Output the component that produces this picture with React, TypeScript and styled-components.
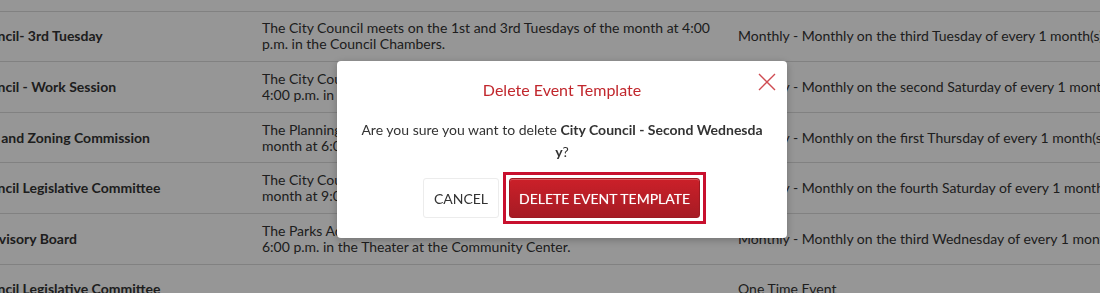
import React from 'react';
import styled, { createGlobalStyle } from 'styled-components';

type EventRow = {
  name: string;
  description: string;
  recurrence: string;
};

const rows: EventRow[] = [
  {
    name: 'City Council - Second Wednesday',
    description:
      'The City Council meets on the 2nd Wednesday of the month at 4:00 p.m. in the Council Chambers.',
    recurrence: 'Monthly - Monthly on the second Wednesday of every 1 month(s)',
  },
  {
    name: 'City Council- 3rd Tuesday',
    description:
      'The City Council meets on the 1st and 3rd Tuesdays of the month at 4:00 p.m. in the Council Chambers.',
    recurrence: 'Monthly - Monthly on the third Tuesday of every 1 month(s)',
  },
  {
    name: 'City Council - Work Session',
    description:
      'The City Council holds work sessions on the second and fourth Saturday at 4:00 p.m. in the Council Chambers.',
    recurrence: 'Monthly - Monthly on the second Saturday of every 1 month(s)',
  },
  {
    name: 'Planning and Zoning Commission',
    description:
      'The Planning and Zoning Commission meets the first Thursday of every month at 6:00 p.m. in the Council Chambers.',
    recurrence: 'Monthly - Monthly on the first Thursday of every 1 month(s)',
  },
  {
    name: 'City Council Legislative Committee',
    description:
      'The City Council Legislative Committee meets the fourth Saturday of every month at 9:00 a.m. in the Council Chambers.',
    recurrence: 'Monthly - Monthly on the fourth Saturday of every 1 month(s)',
  },
  {
    name: 'Parks Advisory Board',
    description:
      'The Parks Advisory Board meets on the third Wednesday of the month at 6:00 p.m. in the Theater at the Community Center.',
    recurrence: 'Monthly - Monthly on the third Wednesday of every 1 month(s)',
  },
  {
    name: 'City Council Legislative Committee',
    description: '',
    recurrence: 'One Time Event',
  },
];

const GlobalStyle = createGlobalStyle`
  html, body {
    margin: 0;
    padding: 0;
    background: #fff;
    overflow: hidden;
  }
  body {
    font-family: Lato, "Noto Sans", sans-serif;
    color: #333;
  }
`;

const Page = styled.div`
  width: 1100px;
  height: 293px;
  overflow: hidden;
`;

/* the list is scrolled: part of the first row and the first column are out of view */
const Table = styled.div`
  width: 1280px;
  margin: -39px 0 0 -64px;
`;

const Row = styled.div`
  display: grid;
  grid-template-columns: 318px 476px 1fr;
  align-items: center;
  min-height: 50.6px;
  box-sizing: border-box;
  border-bottom: 1px solid #dcdcdc;
`;

const Cell = styled.div<{ $bold?: boolean; $nowrap?: boolean }>`
  padding: 8px;
  font-size: 14px;
  line-height: 16px;
  font-weight: ${(p) => (p.$bold ? 700 : 400)};
  white-space: ${(p) => (p.$nowrap ? 'nowrap' : 'normal')};
  color: #333;
`;

const Backdrop = styled.div`
  position: fixed;
  inset: 0;
  background: rgba(0, 0, 0, 0.41);
  display: flex;
  align-items: center;
  justify-content: center;
`;

const Dialog = styled.div`
  position: relative;
  width: 450px;
  box-sizing: border-box;
  margin: 6px 0 0 24px;
  padding: 19px 24px 13px;
  background: #fff;
  border-radius: 4px;
  box-shadow: 0 2px 8px rgba(0, 0, 0, 0.25);
  text-align: center;
`;

const CloseButton = styled.button`
  position: absolute;
  top: 11px;
  right: 11px;
  width: 19px;
  height: 19px;
  padding: 0;
  border: 0;
  background: none;
  cursor: pointer;
  display: flex;
  align-items: center;
  justify-content: center;
`;

const Title = styled.h2`
  margin: 0;
  font-size: 16px;
  line-height: 20px;
  font-weight: 400;
  color: #c1272d;
`;

const Message = styled.p`
  margin: 19px 0 0;
  font-size: 14px;
  line-height: 22px;
  color: #333;
  word-break: break-all;

  strong {
    font-weight: 700;
  }
`;

const Actions = styled.div`
  display: flex;
  justify-content: center;
  align-items: center;
  gap: 4px;
  margin-top: 8px;
  padding: 1px 0 1px 5px;
`;

const FocusRing = styled.span`
  display: inline-flex;
  padding: 3px;
  border: 3px solid #c8102e;
`;

const Button = styled.button<{ $primary?: boolean }>`
  height: 40px;
  box-sizing: border-box;
  padding: 0 ${(p) => (p.$primary ? '9px' : '10px')};
  font-family: Lato, "Noto Sans", sans-serif;
  font-size: 14px;
  text-transform: uppercase;
  border-radius: 3px;
  cursor: pointer;
  color: ${(p) => (p.$primary ? '#fff' : '#333')};
  border: 1px solid ${(p) => (p.$primary ? '#9d1a22' : '#ececec')};
  background: ${(p) =>
    p.$primary ? 'linear-gradient(#cb2029, #a61b24)' : '#fff'};
  box-shadow: ${(p) =>
    p.$primary ? 'inset 0 1px 0 rgba(255, 255, 255, 0.25)' : 'none'};
  text-shadow: ${(p) => (p.$primary ? '0 0 1px rgba(255, 255, 255, 0.5)' : 'none')};
  outline: none;
`;

function CloseIcon() {
  return (
    <svg width="18" height="18" viewBox="0 0 18 18">
      <path d="M1 1 L17 17 M17 1 L1 17" stroke="#cf4b52" strokeWidth="1.4" fill="none" />
    </svg>
  );
}

export default function App() {
  return (
    <Page>
      <GlobalStyle />
      <Table>
        {rows.map((row, i) => (
          <Row key={i}>
            <Cell $bold $nowrap>{row.name}</Cell>
            <Cell>{row.description}</Cell>
            <Cell $nowrap>{row.recurrence}</Cell>
          </Row>
        ))}
      </Table>
      <Backdrop>
        <Dialog role="dialog">
          <CloseButton aria-label="Close">
            <CloseIcon />
          </CloseButton>
          <Title>Delete Event Template</Title>
          <Message>
            Are you sure you want to delete <strong>City Council - Second Wednesday</strong>?
          </Message>
          <Actions>
            <Button>Cancel</Button>
            <FocusRing>
              <Button $primary>Delete Event Template</Button>
            </FocusRing>
          </Actions>
        </Dialog>
      </Backdrop>
    </Page>
  );
}
